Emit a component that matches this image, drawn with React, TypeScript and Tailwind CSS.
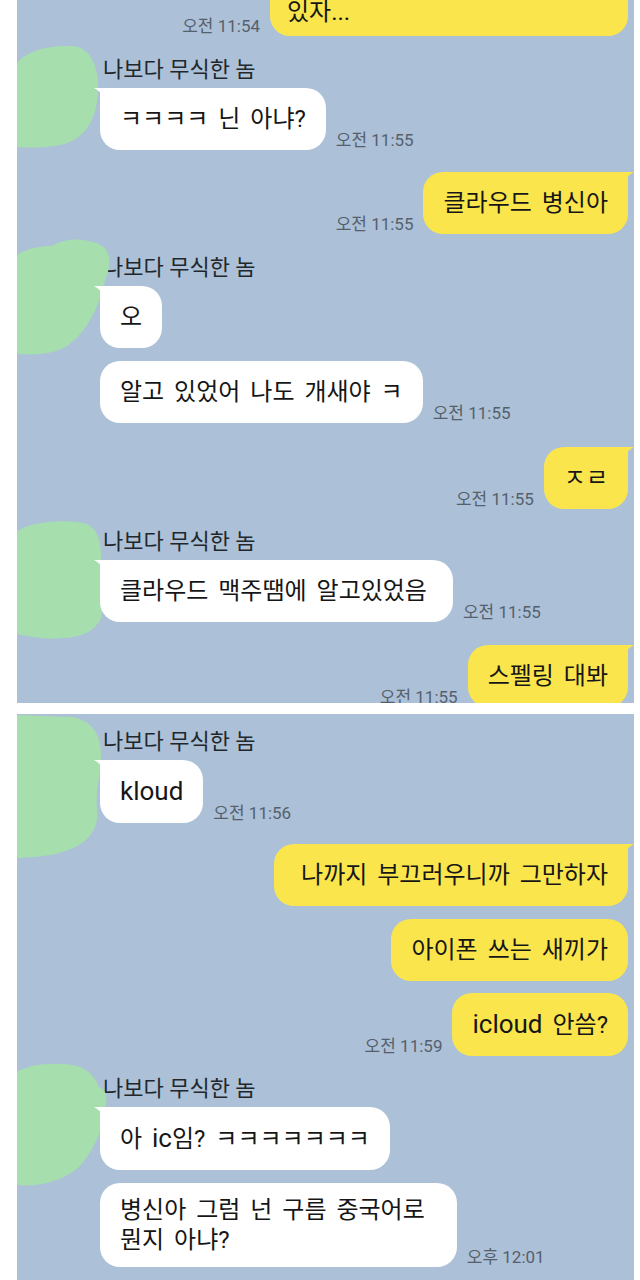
import React from "react";

const FONT = { fontFamily: 'Roboto, "Noto Sans CJK KR", "Noto Sans", sans-serif' };

function Time({ children }: { children: React.ReactNode }) {
  return (
    <span className="text-[17px] leading-[20px] text-[#56606d] whitespace-nowrap">
      {children}
    </span>
  );
}

function Bubble({
  children,
  side,
  tail,
  className = "",
}: {
  children: React.ReactNode;
  side: "left" | "right";
  tail?: boolean;
  className?: string;
}) {
  const bg = side === "left" ? "bg-white" : "bg-[#fae54d]";
  const fill = side === "left" ? "#ffffff" : "#fae54d";
  const corner = tail ? (side === "left" ? "rounded-tl-[4px]" : "rounded-tr-[4px]") : "";
  return (
    <div
      className={`relative ${bg} rounded-[20px] ${corner} px-[20px] py-[16px] text-[24px] leading-[30px] [word-spacing:4px] text-[#161616] whitespace-nowrap ${className}`}
    >
      {tail && side === "left" && (
        <svg className="absolute left-[-6px] top-0" width="12" height="16" viewBox="0 0 12 16">
          <path d="M0 0 L12 0 L12 16 C10 8 6 3 0 0 Z" fill={fill} />
        </svg>
      )}
      {tail && side === "right" && (
        <svg className="absolute right-[-6px] top-0" width="12" height="16" viewBox="0 0 12 16">
          <path d="M12 0 L0 0 L0 16 C2 8 6 3 12 0 Z" fill={fill} />
        </svg>
      )}
      {children}
    </div>
  );
}

function Blob({ top, w, h, d }: { top: number; w: number; h: number; d: string }) {
  return (
    <svg
      className="absolute left-0"
      style={{ top }}
      width={w}
      height={h}
      viewBox={`0 0 ${w} ${h}`}
    >
      <path d={d} fill="#a6dfad" />
    </svg>
  );
}

function Other({
  blob,
  className = "",
  children,
}: {
  blob: React.ReactNode;
  className?: string;
  children: React.ReactNode;
}) {
  return (
    <div className={`flex ${className}`}>
      <div className="relative w-[83px] shrink-0">{blob}</div>
      <div className="flex flex-col items-start">
        <div className="pl-[3px] text-[22px] leading-[28px] text-[#23272c] whitespace-nowrap">
          나보다 무식한 놈
        </div>
        {children}
      </div>
    </div>
  );
}

function Me({
  time,
  className = "",
  children,
  tail,
  bubbleClass = "",
}: {
  time?: string;
  className?: string;
  children: React.ReactNode;
  tail?: boolean;
  bubbleClass?: string;
}) {
  return (
    <div className={`flex justify-end items-end gap-[10px] pr-[6px] ${className}`}>
      {time && <Time>{time}</Time>}
      <Bubble side="right" tail={tail} className={bubbleClass}>
        {children}
      </Bubble>
    </div>
  );
}

export default function App() {
  return (
    <div className="w-[640px] h-[1280px] bg-white overflow-hidden flex flex-col" style={FONT}>
      {/* Panel 1 */}
      <div className="ml-[17px] w-[617px] h-[703px] shrink-0 bg-[#acc1d7] overflow-hidden flex flex-col">
        <Me
          time="오전 11:54"
          className="mt-[-26px]"
          bubbleClass="w-[358px] !px-[17px] !pt-[23px] !pb-[9px]"
        >
          있자...
        </Me>

        <Other
          className="mt-[20px]"
          blob={
            <Blob
              top={-11}
              w={82}
              h={103}
              d="M0 18 C10 5 35 0 55 1 C75 2 82 25 81 45 C80 70 72 90 50 98 C35 103 15 103 0 102 Z"
            />
          }
        >
          <div className="mt-[4px] flex items-end gap-[10px]">
            <Bubble side="left" tail>
              ㅋㅋㅋㅋ 닌 아냐?
            </Bubble>
            <Time>오전 11:55</Time>
          </div>
        </Other>

        <Me time="오전 11:55" className="mt-[22px]" tail>
          클라우드 병신아
        </Me>

        <Other
          className="mt-[20px]"
          blob={
            <Blob
              top={-16}
              w={96}
              h={117}
              d="M0 17 C10 10 25 8 35 8 C45 2 60 -1 75 4 C86 6 91 12 92 20 C94 30 88 40 86 50 C80 70 72 92 50 108 C35 117 15 117 0 116 Z"
            />
          }
        >
          <div className="mt-[4px] flex items-end gap-[10px]">
            <Bubble side="left" tail>
              오
            </Bubble>
          </div>
          <div className="mt-[13px] flex items-end gap-[10px]">
            <Bubble side="left">알고 있었어 나도 개새야 ㅋ</Bubble>
            <Time>오전 11:55</Time>
          </div>
        </Other>

        <Me time="오전 11:55" className="mt-[24px]" tail>
          ㅈㄹ
        </Me>

        <Other
          className="mt-[19px]"
          blob={
            <Blob
              top={-8}
              w={88}
              h={120}
              d="M0 12 C10 2 50 -2 70 4 C82 10 84 25 84 35 C86 55 82 70 85 85 C88 105 70 118 45 118 C30 120 10 116 0 114 Z"
            />
          }
        >
          <div className="mt-[4px] flex items-end gap-[10px]">
            <Bubble side="left" tail className="!pr-[26px]">
              클라우드 맥주땜에 알고있었음
            </Bubble>
            <Time>오전 11:55</Time>
          </div>
        </Other>

        <Me time="오전 11:55" className="mt-[23px]" tail>
          스펠링 대봐
        </Me>
      </div>

      {/* Panel 2 */}
      <div className="ml-[17px] mt-[11px] w-[617px] flex-1 bg-[#acc1d7] overflow-hidden flex flex-col pt-[14px]">
        <Other
          blob={
            <Blob
              top={-13}
              w={86}
              h={143}
              d="M0 0 L55 2 C75 5 84 20 84 40 C84 60 78 75 80 95 C82 115 70 130 45 137 C30 142 12 142 0 143 Z"
            />
          }
        >
          <div className="mt-[4px] flex items-end gap-[10px]">
            <Bubble side="left" tail>
              <span className="text-[26px]">kloud</span>
            </Bubble>
            <Time>오전 11:56</Time>
          </div>
        </Other>

        <Me className="mt-[21px]" tail bubbleClass="!pl-[27px]">
          나까지 부끄러우니까 그만하자
        </Me>
        <Me className="mt-[13px]">아이폰 쓰는 새끼가</Me>
        <Me time="오전 11:59" className="mt-[12px]">
          <span className="text-[26px]">icloud</span> 안씀?
        </Me>

        <Other
          className="mt-[19px]"
          blob={
            <Blob
              top={-13}
              w={90}
              h={125}
              d="M0 10 C12 2 35 0 55 3 C70 5 78 15 82 25 C92 30 90 40 88 45 C88 60 80 85 62 105 C45 120 20 125 0 123 Z"
            />
          }
        >
          <div className="mt-[4px] flex items-end gap-[10px]">
            <Bubble side="left" tail>
              아 <span className="text-[26px]">ic</span>임? ㅋㅋㅋㅋㅋㅋㅋ
            </Bubble>
          </div>
          <div className="mt-[13px] flex items-end gap-[10px]">
            <Bubble side="left" className="!py-[12px] !pr-[32px]">
              병신아 그럼 넌 구름 중국어로
              <br />
              뭔지 아냐?
            </Bubble>
            <Time>오후 12:01</Time>
          </div>
        </Other>
      </div>
    </div>
  );
}
